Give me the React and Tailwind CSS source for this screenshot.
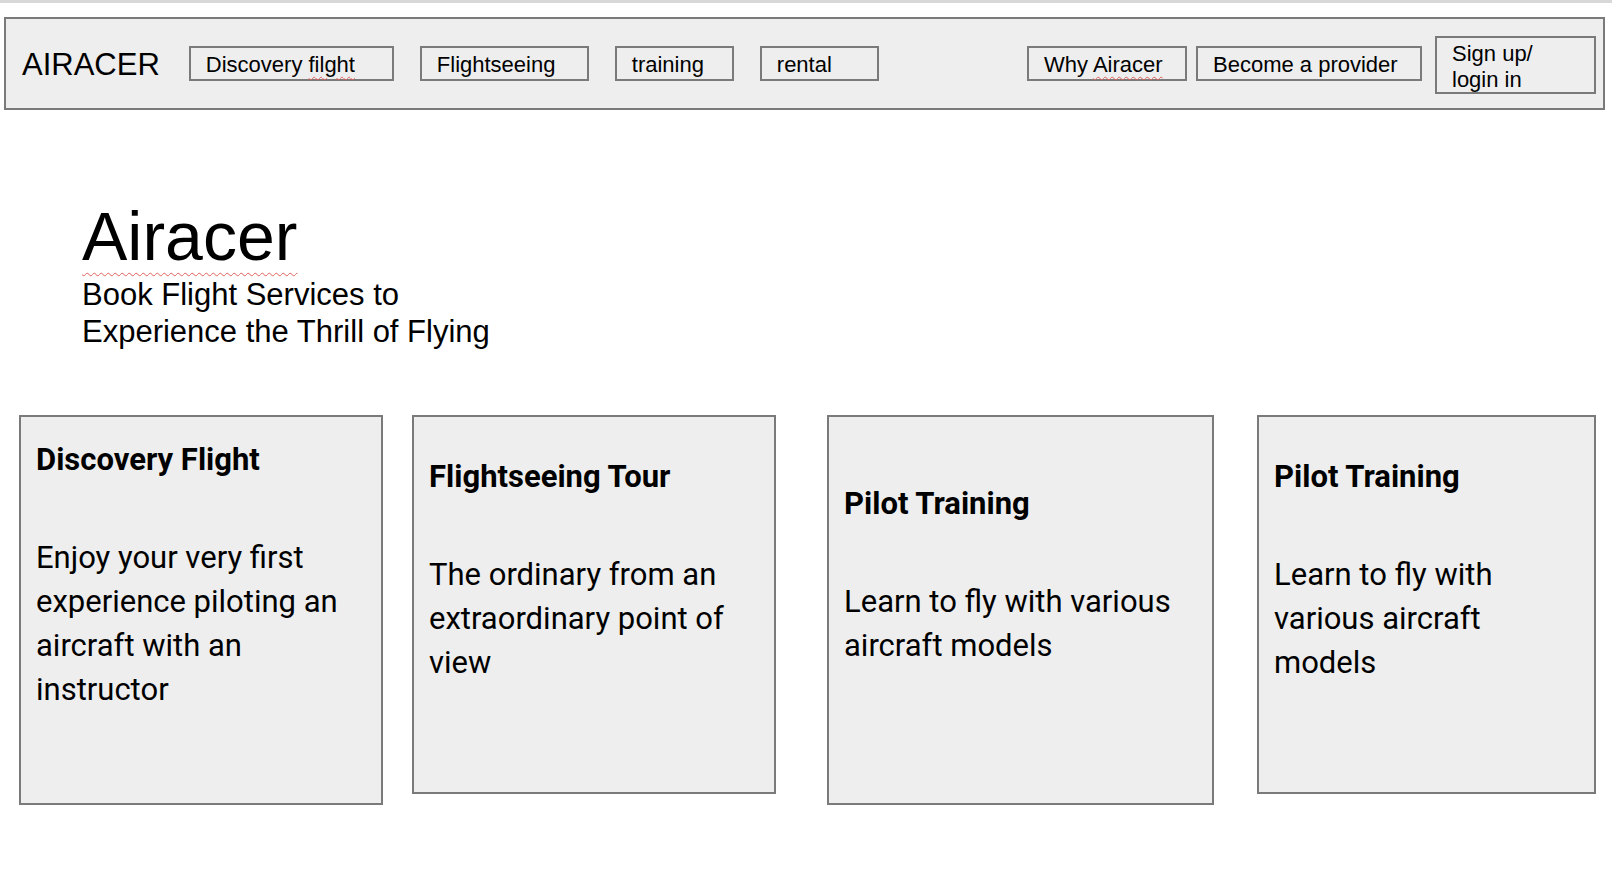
import React from 'react';

const spell = 'underline decoration-wavy decoration-[#e0605a] decoration-1';

const navLeft = [
  { label: <>Discovery <span className={`${spell} underline-offset-[4px]`}>filght</span></>, w: 'w-[205px]' },
  { label: 'Flightseeing', w: 'w-[169px]' },
  { label: 'training', w: 'w-[119px]' },
  { label: 'rental', w: 'w-[119px]' },
];

const cards = [
  {
    title: 'Discovery Flight',
    body: 'Enjoy your very first experience piloting an aircraft with an instructor',
    box: 'ml-[19px] w-[364px] h-[390px] pt-[21px]',
  },
  {
    title: 'Flightseeing Tour',
    body: 'The ordinary from an extraordinary point of view',
    box: 'ml-[29px] w-[364px] h-[379px] pt-[38px]',
  },
  {
    title: 'Pilot Training',
    body: 'Learn to fly with various aircraft models',
    box: 'ml-[51px] w-[387px] h-[390px] pt-[65px]',
  },
  {
    title: 'Pilot Training',
    body: 'Learn to fly with various aircraft models',
    box: 'ml-[43px] w-[339px] h-[379px] pt-[38px]',
  },
];

function NavButton({ children, className = '' }) {
  return (
    <div className={`h-[35px] border-2 border-[#7a7a7a] pl-[15px] pt-[2px] flex items-center text-[22px] leading-none ${className}`}>
      <span>{children}</span>
    </div>
  );
}

export default function App() {
  return (
    <div className="min-h-screen bg-white text-black font-['Liberation_Sans',Arial,sans-serif]">
      <div className="h-[3px] bg-[#d8d8d8]" />

      {/* top bar */}
      <div className="mt-[14px] ml-[4px] w-[1601px] h-[93px] border-2 border-[#7a7a7a] bg-[#eeeeee] flex items-center pl-[16px] pr-[7px]">
        <div className="text-[31px] leading-none mr-[29px] pt-[2px]">AIRACER</div>
        <div className="flex gap-[26px]">
          {navLeft.map((n, i) => (
            <NavButton key={i} className={n.w}>{n.label}</NavButton>
          ))}
        </div>
        <div className="flex-1" />
        <NavButton className="w-[160px]">
          Why <span className={`${spell} underline-offset-[4px]`}>Airacer</span>
        </NavButton>
        <NavButton className="w-[226px] ml-[9px]">Become a provider</NavButton>
        <div className="ml-[13px] mt-[2px] w-[161px] h-[58px] border-2 border-[#7a7a7a] pl-[15px] text-[22px] leading-[26px] pt-[3px]">
          Sign up/<br />login in
        </div>
      </div>

      {/* hero */}
      <div className="pl-[82px] mt-[92px]">
        <h1 className="text-[68px] leading-none">
          <span className={`${spell} underline-offset-[12px]`}>Airacer</span>
        </h1>
        <p className="mt-[6px] text-[31px] leading-[37px]">
          Book Flight Services to<br />Experience the Thrill of Flying
        </p>
      </div>

      {/* services */}
      <div className="mt-[65px] flex items-start font-['Roboto',sans-serif]">
        {cards.map((c, i) => (
          <div key={i} className={`${c.box} shrink-0 border-2 border-[#7a7a7a] bg-[#eeeeee] px-[15px]`}>
            <h2 className="text-[31px] leading-[44px] font-bold mb-[54px]">{c.title}</h2>
            <p className="text-[31px] leading-[44px]">{c.body}</p>
          </div>
        ))}
      </div>
    </div>
  );
}
